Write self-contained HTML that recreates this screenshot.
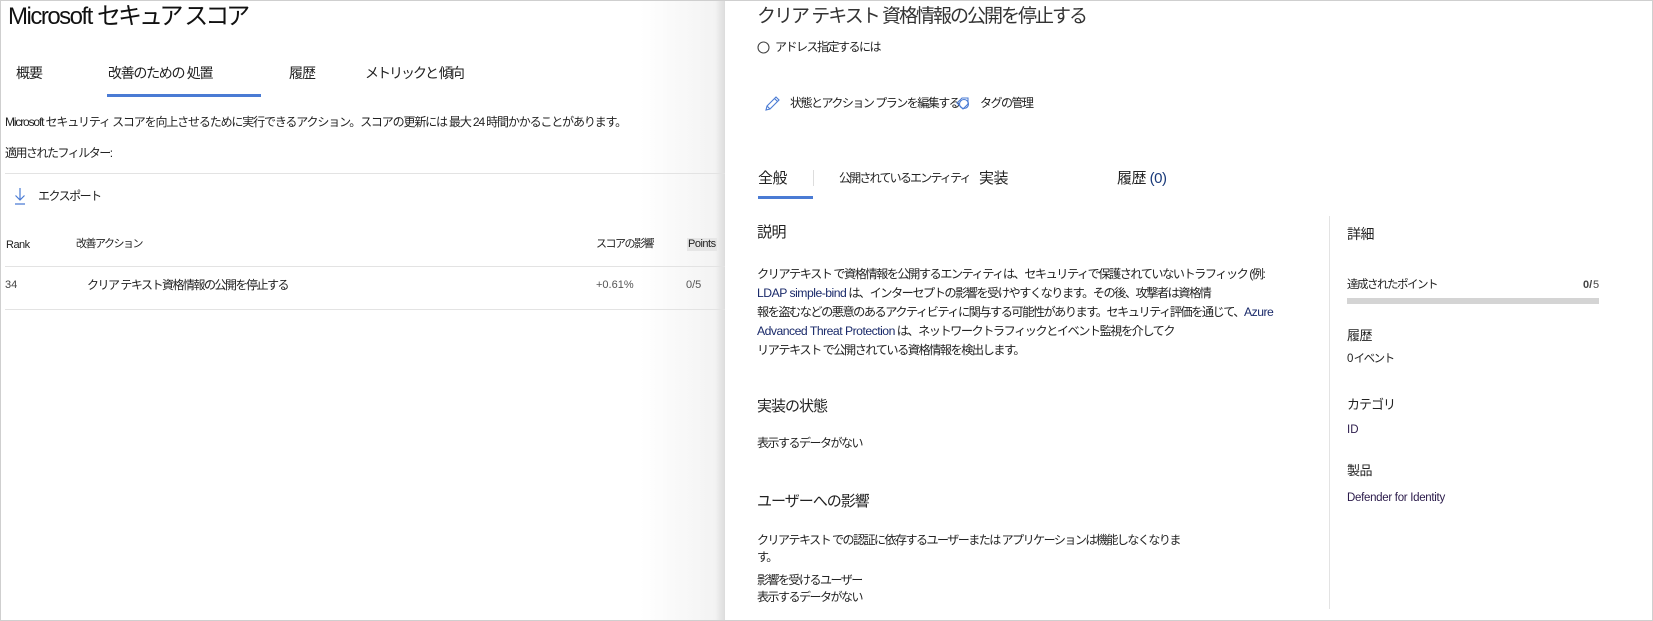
<!DOCTYPE html>
<html><head><meta charset="utf-8"><style>
*{margin:0;padding:0;box-sizing:border-box}
body{width:1653px;height:621px;overflow:hidden;background:#fff;font-family:"Liberation Sans","Noto Sans CJK JP",sans-serif;color:#222;position:relative}
.a{position:absolute;white-space:nowrap;line-height:1}
.s{font-size:12px;letter-spacing:-1.5px}
.frame{position:absolute;left:0;top:0;width:1653px;height:621px;border:1px solid #cfcfcf;pointer-events:none}
#left{position:absolute;left:0;top:0;width:725px;height:621px;background:linear-gradient(to right,#fff 0,#fff 640px,#f3f3f3 715px,#dcdcdc 725px)}
.hl{position:absolute;height:1px;background:#e3e3e3}
</style></head><body>
<div id="left"></div>
<div class="a" style="left:8px;top:5px;font-size:24px;letter-spacing:-1.5px;color:#111">Microsoft <span style="letter-spacing:-3px">セキュア スコア</span></div>

<div class="a" style="left:16px;top:66px;font-size:14px;letter-spacing:-1px">概要</div>
<div class="a" style="left:108px;top:66px;font-size:14px;letter-spacing:-1.3px">改善のための 処置</div>
<div class="a" style="left:289px;top:66px;font-size:14px;letter-spacing:-1px">履歴</div>
<div class="a" style="left:365px;top:66px;font-size:14px;letter-spacing:-2px">メトリックと 傾向</div>
<div style="position:absolute;left:107px;top:94px;width:154px;height:3px;background:#4a7bd4"></div>

<div class="a s" style="left:5px;top:116px;letter-spacing:-1.15px">Microsoft セキュリティ スコアを向上させるために実行できるアクション。スコアの更新には 最大 24 時間かかることがあります。</div>
<div class="a s" style="left:5px;top:147px">適用されたフィルター:</div>
<div class="hl" style="left:5px;top:173px;width:720px"></div>
<svg style="position:absolute;left:14px;top:187px" width="12" height="18" viewBox="0 0 12 18"><path d="M6 1v12M1.5 8.5L6 13l4.5-4.5M1 17h10" stroke="#4a7bd4" stroke-width="1.2" fill="none"/></svg>
<div class="a s" style="left:38px;top:190px">エクスポート</div>

<div class="a" style="left:6px;top:240px;font-size:11px;letter-spacing:-0.5px">Rank</div>
<div class="a s" style="left:76px;top:239px;font-size:11px">改善アクション</div>
<div class="a s" style="left:596px;top:239px;font-size:11px">スコアの影響</div>
<div class="a" style="left:687px;top:238px;font-size:11px;letter-spacing:-0.5px;background:#e6e6e6;padding:1px 1px">Points</div>
<div class="hl" style="left:5px;top:266px;width:720px"></div>
<div class="a" style="left:5px;top:280px;font-size:11px;color:#444">34</div>
<div class="a s" style="left:87px;top:279px">クリア テキスト資格情報の公開を停止する</div>
<div class="a" style="left:596px;top:280px;font-size:11px;color:#555">+0.61%</div>
<div class="a" style="left:686px;top:280px;font-size:11px;color:#555">0/5</div>
<div class="hl" style="left:5px;top:309px;width:720px"></div>

<div class="a" style="left:757px;top:7px;font-size:19px;letter-spacing:-2px;color:#333">クリア テキスト 資格情報の公開を停止する</div>
<svg style="position:absolute;left:757px;top:41px" width="13" height="13"><circle cx="6.5" cy="6.5" r="5.5" stroke="#444" stroke-width="1.1" fill="none"/></svg>
<div class="a s" style="left:775px;top:41px">アドレス指定するには</div>

<svg style="position:absolute;left:764px;top:95px" width="17" height="17" viewBox="0 0 17 17"><path d="M2 15l1-4L12 2l3 3-9 9zM3 11l3 3M10.5 3.5l3 3" stroke="#4a7bd4" stroke-width="1.1" fill="none"/></svg>
<div class="a s" style="left:790px;top:97px">状態とアクション プランを編集する</div>
<svg style="position:absolute;left:955px;top:96px" width="16" height="14" viewBox="0 0 16 14"><path d="M2 7l5-5h6v6l-5 5z" stroke="#4a7bd4" stroke-width="1.1" fill="none"/><circle cx="9" cy="8" r="4.5" stroke="#4a7bd4" stroke-width="1.1" fill="none"/></svg>
<div class="a s" style="left:980px;top:97px">タグの管理</div>

<div class="a" style="left:758px;top:171px;font-size:15px;letter-spacing:-0.5px">全般</div>
<div style="position:absolute;left:813px;top:170px;width:1px;height:16px;background:#ddd"></div>
<div class="a s" style="left:839px;top:172px;font-size:12px;letter-spacing:-1.8px">公開されているエンティティ</div>
<div class="a" style="left:979px;top:171px;font-size:15px;letter-spacing:-0.5px">実装</div>
<div class="a" style="left:1117px;top:171px;font-size:15px;letter-spacing:-0.5px">履歴 <span style="color:#1a3a7a">(0)</span></div>
<div style="position:absolute;left:758px;top:196px;width:55px;height:3px;background:#4a7bd4"></div>

<div style="position:absolute;left:1329px;top:216px;width:1px;height:393px;background:#e3e3e3"></div>

<div class="a" style="left:757px;top:225px;font-size:15px;letter-spacing:-0.5px">説明</div>
<div class="a s" style="left:757px;top:265px;line-height:19px;font-size:12.2px">クリアテキスト で資格情報を公開するエンティティは、セキュリティで保護されていないトラフィック (例:<br><span style="color:#1a2a6a;letter-spacing:-0.5px">LDAP simple-bind</span> は、インターセプトの影響を受けやすくなります。その後、攻撃者は資格情<br>報を盗むなどの悪意のあるアクティビティに関与する可能性があります。セキュリティ評価を通じて、<span style="color:#1a2a6a;letter-spacing:-0.5px">Azure</span><br><span style="color:#1a2a6a;letter-spacing:-0.5px">Advanced Threat Protection</span> は、ネットワークトラフィックとイベント監視を介してク<br>リアテキスト で公開されている資格情報を検出します。</div>

<div class="a" style="left:757px;top:399px;font-size:15px;letter-spacing:-1px">実装の状態</div>
<div class="a s" style="left:757px;top:437px">表示するデータがない</div>
<div class="a" style="left:757px;top:494px;font-size:15px;letter-spacing:-1px">ユーザーへの影響</div>
<div class="a s" style="left:757px;top:532px;line-height:17px">クリアテキスト での認証に依存するユーザーまたは アプリケーションは機能しなくなりま<br>す。</div>
<div class="a s" style="left:757px;top:574px">影響を受けるユーザー</div>
<div class="a s" style="left:757px;top:591px">表示するデータがない</div>

<div class="a" style="left:1347px;top:227px;font-size:14px;letter-spacing:-0.5px">詳細</div>
<div class="a s" style="left:1347px;top:280px;font-size:11.5px">達成されたポイント</div>
<div class="a" style="left:1583px;top:280px;font-size:11px;font-weight:bold;color:#444">0/</div><div class="a" style="left:1593px;top:280px;font-size:11px;color:#444">5</div>
<div style="position:absolute;left:1347px;top:298px;width:252px;height:6px;background:#d4d4d4"></div>
<div class="a" style="left:1347px;top:329px;font-size:13px;letter-spacing:-0.5px">履歴</div>
<div class="a s" style="left:1347px;top:354px;font-size:11.5px">0 イベント</div>
<div class="a" style="left:1347px;top:398px;font-size:13px;letter-spacing:-1px">カテゴリ</div>
<div class="a" style="left:1347px;top:425px;font-size:11.5px;color:#2a1a4a">ID</div>
<div class="a" style="left:1347px;top:464px;font-size:13px;letter-spacing:-0.5px">製品</div>
<div class="a" style="left:1347px;top:493px;font-size:11.5px;letter-spacing:-0.3px;color:#2a1a4a">Defender for Identity</div>
<div class="frame"></div>
</body></html>
